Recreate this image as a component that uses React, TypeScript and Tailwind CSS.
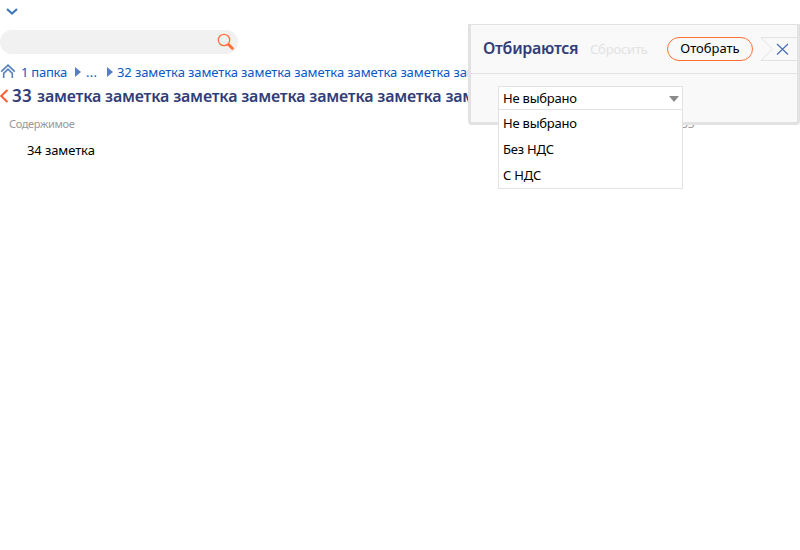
import React from "react";

const NOTES = "заметка заметка заметка заметка заметка заметка заметка";
const OPTIONS = ["Не выбрано", "Без НДС", "С НДС"];

function Crumbs() {
  return (
    <nav className="flex h-5 w-[468px] items-center overflow-hidden whitespace-nowrap text-[13px] leading-5 tracking-[-0.1px] text-[#0a58c4]">
      <svg className="mb-[3px] mr-[5px] h-4 w-4 shrink-0" viewBox="0 0 16 16" fill="none" stroke="#5580bd" strokeWidth="1.6">
        <path d="M1.200 8.700 8 2.200l6.800 6.500" />
        <path d="M3.700 15v-4.700L8 6.200l4.300 4.100V15" />
      </svg>
      <span className="w-[46px] shrink-0 tracking-[-0.25px]">1 папка</span>
      <span className="ml-[8px] h-0 w-0 shrink-0 border-y-[5px] border-l-[6px] border-y-transparent border-l-[#5580bd]" />
      <span className="ml-[5px] w-[12px] shrink-0 tracking-[0.3px]">...</span>
      <span className="ml-[9px] h-0 w-0 shrink-0 border-y-[5px] border-l-[6px] border-y-transparent border-l-[#5580bd]" />
      <span className="ml-[4px] shrink-0">32 {NOTES}</span>
    </nav>
  );
}

function FilterPanel() {
  return (
    <section className="absolute left-[468px] top-[24px] h-[101px] w-[332px] rounded-b-[4px] border-x-[3px] border-b-[3px] border-t border-[#e2e2e2] bg-[#f9f9f9]">
      <header className="flex h-[49px] items-center border-b border-[#e2e2e2] pl-3">
        <h2 className="w-[107px] whitespace-nowrap pb-[3px] text-[16px] font-semibold leading-6 tracking-[-0.28px] text-[#323d78]">Отбираются</h2>
        <span className="w-[77px] shrink-0 pt-px text-[13px] tracking-[-0.2px] text-[#e2e2e2]">Сбросить</span>
        <button className="h-6 w-[86px] shrink-0 whitespace-nowrap rounded-full border border-[#ff7033] pb-[2px] text-[13px] leading-[20px] text-black">Отобрать</button>
        <svg className="ml-[7px] h-6 w-[37px] shrink-0" viewBox="0 0 37 24" fill="none">
          <path d="M37 .5H.8L12.500 12 .8 23.500H37" stroke="#e2e2e2" />
          <path d="m17 7 11 10.500M28 7 17 17.500" stroke="#4a6fb3" strokeWidth="1.200" />
        </svg>
      </header>
      <div className="ml-[27px] mt-3 w-[185px] border border-[#e2e2e2] bg-white text-[13px] tracking-[-0.22px] text-black">
        <div className="flex h-[23px] items-center justify-between border-b border-[#e2e2e2] pl-1 pr-[3px]">
          <span className="pt-px">{OPTIONS[0]}</span>
          <span className="mt-px h-0 w-0 border-x-[5px] border-t-[6px] border-x-transparent border-t-[#8a8a8a]" />
        </div>
        <ul>
          {OPTIONS.map((o) => (
            <li key={o} className="h-[26px] pl-1 leading-[26px]">{o}</li>
          ))}
        </ul>
      </div>
    </section>
  );
}

export default function App() {
  return (
    <main className="relative h-[550px] w-[800px] overflow-hidden bg-white font-['Noto_Sans','Open_Sans',sans-serif]">
      <div className="flex h-[30px] pl-[6px] pt-[8px]">
        <svg className="h-[8px] w-3" viewBox="0 0 12 8" fill="none" stroke="#3f79ba" strokeWidth="2.200">
          <path d="m1 1 5 4.500L11 1" />
        </svg>
      </div>
      <div className="flex h-6 w-[238px] items-center justify-end rounded-full bg-[#f1f1f1] pr-[3px]">
        <svg className="h-[18px] w-[18px]" viewBox="0 0 18 18" fill="none" stroke="#ff7033">
          <circle cx="7" cy="7" r="5.700" strokeWidth="1.200" />
          <path d="m10.800 10.800 5.400 5.400" strokeWidth="2.800" />
        </svg>
      </div>
      <div className="mt-2">
        <Crumbs />
      </div>
      <h1 className="flex h-7 w-[468px] items-center overflow-hidden whitespace-nowrap text-[16px] font-semibold leading-7 tracking-[-0.2px] text-[#323d78]">
        <svg className="mr-[3px] h-[14px] w-[9px] shrink-0" viewBox="0 0 9 14" fill="none" stroke="#ff5f35" strokeWidth="2">
          <path d="M7.500 1 1.200 7l6.300 6" />
        </svg>
        <span className="w-[25px] shrink-0 text-[17px] tracking-[0.3px]">33</span>
        <span>{NOTES}</span>
      </h1>
      <div className="flex h-[28px] items-center pl-[9px] text-[11px] tracking-[-0.35px] text-[#999]">
        <span className="w-[672px]">Содержимое</span>
        <span className="text-[12px] tracking-normal">33</span>
      </div>
      <div className="flex h-[26px] items-center pl-[27px] text-[13px] tracking-[-0.1px] text-black">34 заметка</div>
      <FilterPanel />
    </main>
  );
}
